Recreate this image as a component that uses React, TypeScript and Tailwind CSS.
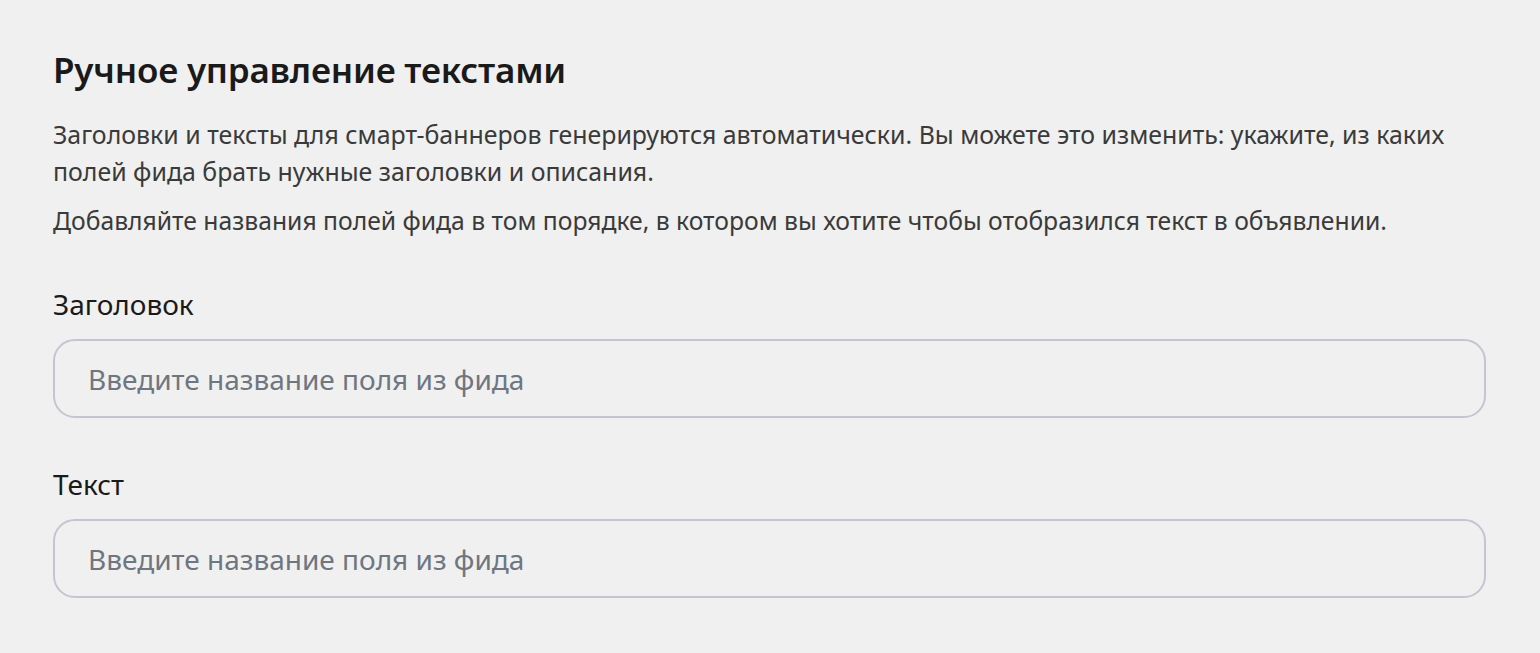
export default function App() {
  const font = { fontFamily: '"Noto Sans", "Open Sans", sans-serif' };
  return (
    <div className="min-h-[653px] w-[1540px] bg-[#f0f0f0] px-[53px] pt-[46px]" style={font}>
      <h1 className="text-[35px] font-semibold leading-[48px] tracking-[-0.2px] text-[#1a1a1a]">
        Ручное управление текстами
      </h1>
      <p className="mt-[22px] w-[1420px] text-[24.9px] leading-[37px] text-[#3a3a3a]">
        Заголовки и тексты для смарт-баннеров генерируются автоматически. Вы можете это изменить: укажите, из каких
        полей фида брать нужные заголовки и описания.
      </p>
      <p className="mt-[12px] text-[24.7px] leading-[37px] text-[#3a3a3a]">
        Добавляйте названия полей фида в том порядке, в котором вы хотите чтобы отобразился текст в объявлении.
      </p>

      <Field label="Заголовок" className="mt-[47px]" />
      <Field label="Текст" className="mt-[48px]" />
    </div>
  );
}

function Field({ label, className }: { label: string; className?: string }) {
  return (
    <div className={className}>
      <div className="text-[28px] leading-[36px] text-[#1a1a1a]">{label}</div>
      <input
        placeholder="Введите название поля из фида"
        className="mt-[17px] h-[79px] w-[1433px] rounded-[22px] border-[2px] border-[#c3c6d1] bg-transparent px-[33px] text-[28px] text-[#1a1a1a] outline-none placeholder:text-[#6f7680]"
      />
    </div>
  );
}
